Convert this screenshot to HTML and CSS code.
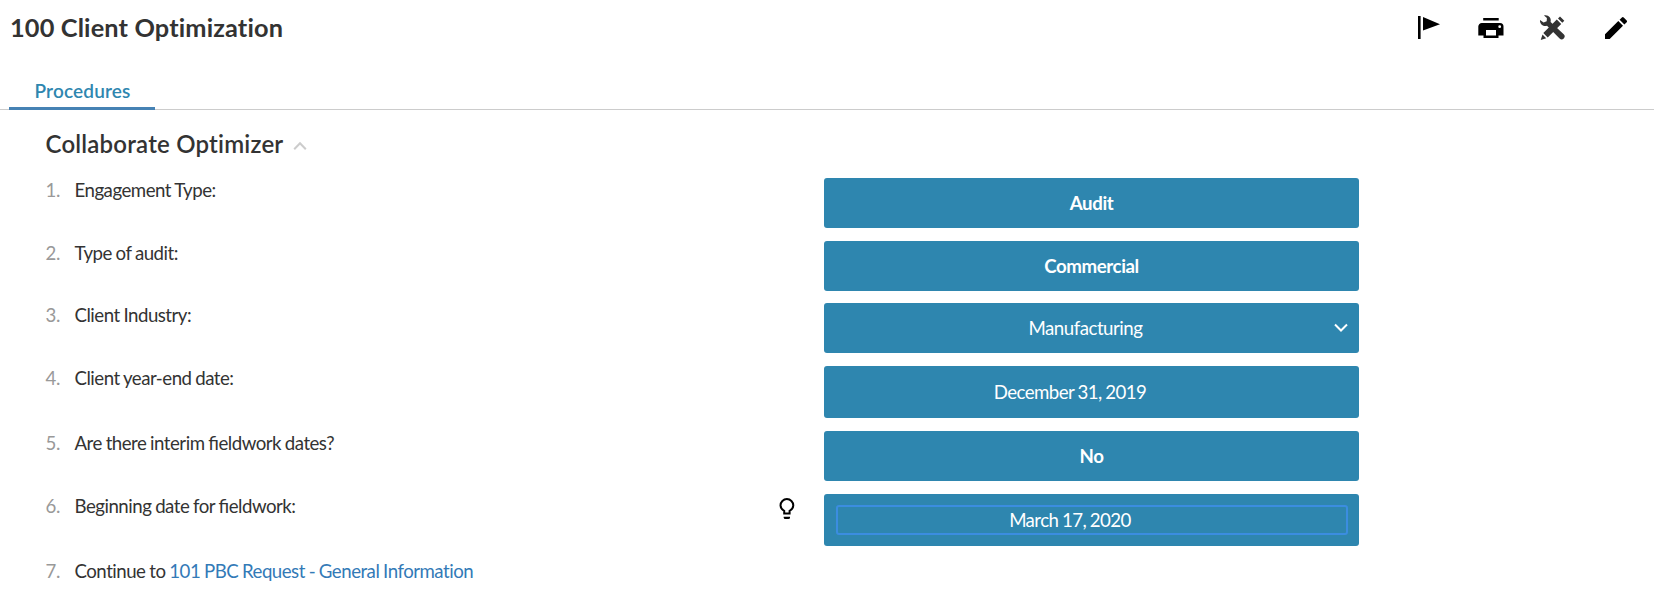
FILE: index.html
```
<!DOCTYPE html>
<html lang="en">
<head>
<meta charset="utf-8">
<title>100 Client Optimization</title>
<link rel="stylesheet" href="styles.css">
</head>
<body>
<header class="header">
  <h1 class="title">100 Client Optimization</h1>
  <div class="tools">
    <svg class="tool" viewBox="0 0 28 28"><path d="M3 2h2.600v23H3zM8 3l17 7.200L8 16.500z"/></svg>
    <svg class="tool" viewBox="0 0 28 28"><path d="M6.200 4h15.500v2.600H6.200zM5 9h18a3.500 3.500 0 0 1 3.500 3.500V21.500h-5V24h-15v-2.500h-5.200V12.500A3.500 3.500 0 0 1 5 9zM9 16v5.600h10V16zM22.700 11.300a1.400 1.400 0 1 0 0 2.800a1.400 1.400 0 0 0 0-2.800z" fill-rule="evenodd"/></svg>
    <svg class="tool tool-dark" viewBox="1 0 28 28"><path d="M1 6L4.600 8.400L7.700 7.200L7.900 4L5 1.500C9 .3 12.800 3.800 11.600 8L24.700 20.300A2.900 2.900 0 0 1 20.600 24.500L8 11.700C4.200 13 .5 10 1 6z"/><path d="M17.800 5.600L22.200 10L8.700 23.500L4.300 19.100zM19 4.500L21 2.500L25.300 6.800L23.300 8.800zM3.500 20.600L7.200 24.200L1.700 26z"/></svg>
    <svg class="tool" viewBox="0 0 28 28"><path d="M3 20.300L16.300 7L21 11.700L7.700 25H3zM17.600 5.700L19.900 3.400Q20.800 2.600 21.700 3.400L24.700 6.400Q25.500 7.300 24.700 8.200L22.400 10.400z"/></svg>
  </div>
</header>
<nav class="tabs"><a class="tab">Procedures</a></nav>
<main class="content">
  <h2 class="section">Collaborate Optimizer
    <svg class="caret" viewBox="0 0 14 10"><path d="M1.200 8.200L7 2.200L12.800 8.200"/></svg>
  </h2>
  <div class="list">
    <div class="row"><span class="num">1.</span><span class="label">Engagement Type:</span><div class="answer strong">Audit</div></div>
    <div class="row"><span class="num">2.</span><span class="label">Type of audit:</span><div class="answer strong">Commercial</div></div>
    <div class="row"><span class="num">3.</span><span class="label">Client Industry:</span><div class="answer select">Manufacturing<svg class="chevron" viewBox="0 0 14 10"><path d="M1 1.500L7 7.500L13 1.500"/></svg></div></div>
    <div class="row"><span class="num">4.</span><span class="label">Client year-end date:</span><div class="answer date"><span class="field">December 31, 2019</span></div></div>
    <div class="row"><span class="num">5.</span><span class="label">Are there interim <span class="lig">fi</span>eldwork dates?</span><div class="answer strong">No</div></div>
    <div class="row"><span class="num">6.</span><span class="label">Beginning date for <span class="lig">fi</span>eldwork:</span><svg class="bulb" viewBox="0 0 16 22"><path class="bulb-glass" d="M5.200 15.500V12.800C3 11.500 1.500 9.800 1.500 7.500a6.200 6.200 0 0 1 12.800 0c0 2.300-1.500 4-3.700 5.300v2.700z"/><path d="M4.700 18.800h6.300v.7q0 1.500-1.500 1.500H6.200q-1.500 0-1.500-1.500z"/></svg><div class="answer date"><span class="field focused">March 17, 2020</span></div></div>
    <div class="row"><span class="num">7.</span><span class="label">Continue to <a class="link">101 PBC Request - General Information</a></span></div>
  </div>
</main>
</body>
</html>
```
FILE: styles.css
```
* { box-sizing: border-box; }
body { margin: 0; background: #fff; color: #333; font-family: Lato, "Liberation Sans", sans-serif; font-size: 18.67px; overflow: hidden; }
.header { height: 74px; display: flex; justify-content: space-between; align-items: flex-start; padding: 14px 24px 0 10px; }
.title { margin: -1px 0 0; font-size: 25.33px; line-height: 28px; font-weight: 700; letter-spacing: 0.14px; }
.tools { display: flex; gap: 34.500px; }
.tool { width: 28px; height: 28px; display: block; overflow: visible; }
.tool-dark { fill: #333; }
.tabs { height: 36px; padding-left: 9px; display: flex; border-bottom: 1px solid #ccc; }
.tab { width: 146px; height: 36px; padding-left: 1px; border-bottom: 3px solid #4682b4; color: #2e86af; font-size: 19px; line-height: 34px; font-weight: 600; letter-spacing: 0.15px; text-align: center; }
.content { padding: 19px 0 0 45px; }
.section { margin: 0; height: 49px; padding-left: 0.500px; font-size: 24px; line-height: 30px; font-weight: 600; letter-spacing: 0.2px; display: flex; align-items: flex-start; gap: 10px; }
.caret { width: 14px; height: 10px; margin-top: 12px; fill: none; stroke: #ccc; stroke-width: 2; }
.list { display: flex; flex-direction: column; gap: 12.67px; }
.row { display: flex; align-items: flex-start; line-height: 24px; }
.num { width: 29.500px; padding-left: 0.500px; letter-spacing: -0.3px; color: #999; }
.label { width: 704.500px; letter-spacing: -0.5px; word-spacing: -0.5px; }
.lig { font-feature-settings: "liga" 1; }
.answer { width: 535px; height: 50px; margin-left: 45px; border-radius: 3px; background: #2e86af; color: #fff; display: flex; align-items: center; justify-content: center; position: relative; }
.strong { font-weight: 700; letter-spacing: -0.4px; }
.select { padding-right: 12px; letter-spacing: -0.48px; }
.date { height: 52.33px; letter-spacing: -0.56px; word-spacing: -0.6px; }
.field { width: 512px; height: 30px; line-height: 26px; border: 2px solid transparent; border-radius: 3px; text-align: center; padding-right: 43px; }
.focused { border-color: #3b8de0; }
.chevron { position: absolute; right: 11.500px; top: 20px; width: 14px; height: 10px; fill: none; stroke: #fff; stroke-width: 2; }
.bulb { width: 16px; height: 22px; margin: 4px -15.500px 0 -0.500px; }
.bulb-glass { fill: none; stroke: #000; stroke-width: 2; }
.link { color: #337ab7; }
```
